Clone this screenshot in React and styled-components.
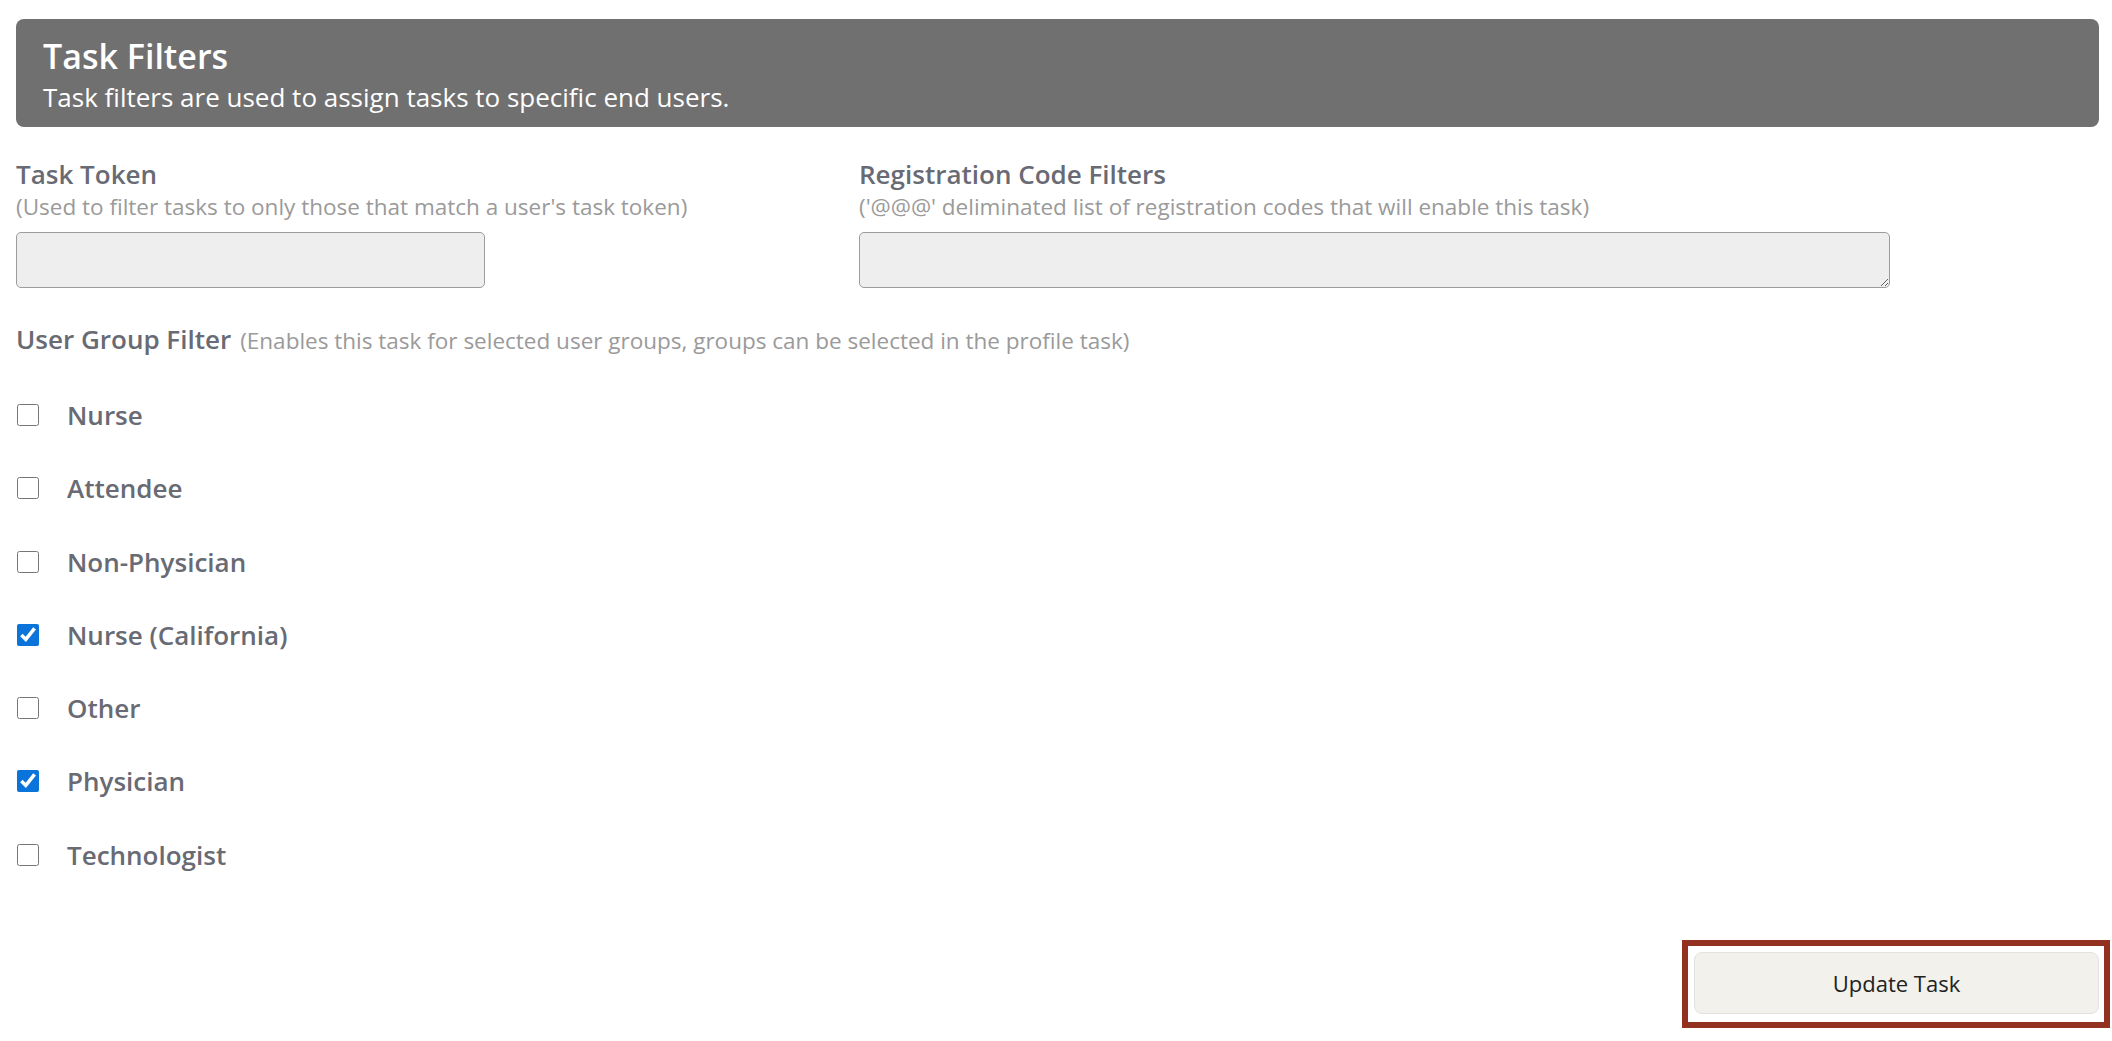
import React, { useState } from 'react';
import styled, { createGlobalStyle } from 'styled-components';

const GlobalStyle = createGlobalStyle`
  html, body {
    margin: 0;
    padding: 0;
    background: #ffffff;
  }
  body {
    font-family: "Open Sans", "Noto Sans", sans-serif;
  }
`;

const Page = styled.div`
  padding: 19px 13px 0 16px;
  box-sizing: border-box;
  width: 2112px;
`;

const Banner = styled.div`
  background: #707070;
  border-radius: 8px;
  padding: 14px 27px 12px;
  color: #ffffff;
`;

const BannerTitle = styled.h2`
  margin: 0;
  font-size: 34px;
  font-weight: 600;
  line-height: 46px;
`;

const BannerText = styled.p`
  margin: 0;
  font-size: 26px;
  line-height: 36px;
`;

const FieldGrid = styled.div`
  display: grid;
  grid-template-columns: 843px 1031px;
  margin-top: 29px;
`;

const Field = styled.div`
  display: flex;
  flex-direction: column;
`;

const Label = styled.label`
  font-size: 26px;
  font-weight: 600;
  line-height: 36px;
  color: #686a74;
`;

const Hint = styled.span`
  font-size: 22.5px;
  line-height: 30px;
  color: #9a9a9a;
  font-weight: 400;
`;

const TextInput = styled.input`
  margin-top: 10px;
  width: ${(p) => p.$width}px;
  height: 56px;
  box-sizing: border-box;
  background: #eeeeee;
  border: 1px solid #9c9c9c;
  border-radius: 5px;
  font: inherit;
  font-size: 22px;
  padding: 0 10px;
`;

const TextArea = styled.textarea`
  margin-top: 10px;
  width: ${(p) => p.$width}px;
  height: 56px;
  box-sizing: border-box;
  background: #eeeeee;
  border: 1px solid #9c9c9c;
  border-radius: 5px;
  font: inherit;
  font-size: 22px;
  padding: 6px 10px;
`;

const GroupHeading = styled.div`
  margin-top: 33px;
  display: flex;
  align-items: baseline;
  gap: 9px;
`;

const CheckList = styled.div`
  margin-top: 40px;
  display: flex;
  flex-direction: column;
  gap: 37.3px;
`;

const CheckRow = styled.label`
  display: flex;
  align-items: center;
  height: 36px;
  gap: 28px;
  font-size: 26px;
  font-weight: 600;
  line-height: 36px;
  color: #686a74;
  cursor: pointer;
`;

const Box = styled.input`
  width: 22px;
  height: 22px;
  margin: 0 0 0 1px;
  accent-color: #0a74da;
`;

const Actions = styled.div`
  display: flex;
  justify-content: flex-end;
  margin-top: 67px;
  margin-right: -11px;
`;

const Highlight = styled.div`
  border: 6px solid #92311f;
  padding: 6px 5px 8px 6px;
`;

const UpdateButton = styled.button`
  width: 405px;
  height: 62px;
  background: #f2f1ec;
  border: 1px solid #e2e2de;
  border-radius: 8px;
  font-family: "Open Sans", "Noto Sans", sans-serif;
  font-size: 22px;
  color: #222222;
  cursor: pointer;
`;

const groups = [
  { name: 'Nurse', checked: false },
  { name: 'Attendee', checked: false },
  { name: 'Non-Physician', checked: false },
  { name: 'Nurse (California)', checked: true },
  { name: 'Other', checked: false },
  { name: 'Physician', checked: true },
  { name: 'Technologist', checked: false },
];

const App = () => {
  const [selected, setSelected] = useState(groups.map((g) => g.checked));

  const toggle = (index) => {
    const next = [...selected];
    next[index] = !next[index];
    setSelected(next);
  };

  return (
    <>
      <GlobalStyle />
      <Page>
        <Banner>
          <BannerTitle>Task Filters</BannerTitle>
          <BannerText>Task filters are used to assign tasks to specific end users.</BannerText>
        </Banner>

        <FieldGrid>
          <Field>
            <Label>Task Token</Label>
            <Hint>(Used to filter tasks to only those that match a user's task token)</Hint>
            <TextInput type="text" $width={469} />
          </Field>
          <Field>
            <Label>Registration Code Filters</Label>
            <Hint>('@@@' deliminated list of registration codes that will enable this task)</Hint>
            <TextArea $width={1031} />
          </Field>
        </FieldGrid>

        <GroupHeading>
          <Label>User Group Filter</Label>
          <Hint>(Enables this task for selected user groups, groups can be selected in the profile task)</Hint>
        </GroupHeading>

        <CheckList>
          {groups.map((group, index) => (
            <CheckRow key={group.name}>
              <Box type="checkbox" checked={selected[index]} onChange={() => toggle(index)} />
              {group.name}
            </CheckRow>
          ))}
        </CheckList>

        <Actions>
          <Highlight>
            <UpdateButton type="button">Update Task</UpdateButton>
          </Highlight>
        </Actions>
      </Page>
    </>
  );
};

export default App;
